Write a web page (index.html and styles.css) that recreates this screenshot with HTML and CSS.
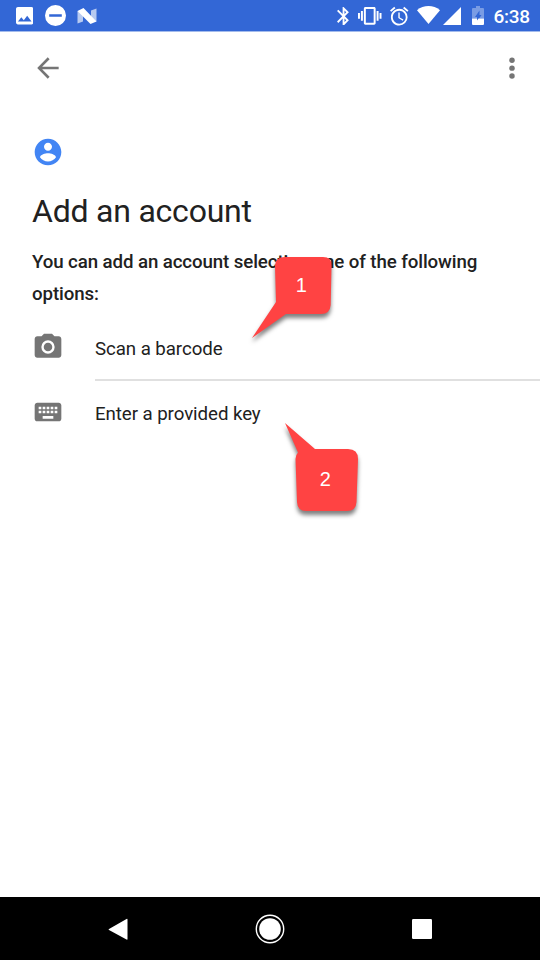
FILE: index.html
```html
<!DOCTYPE html>
<html lang="en">
<head>
<meta charset="utf-8">
<title>Add an account</title>
<link rel="stylesheet" href="styles.css">
</head>
<body>
<div class="screen">
  <header class="status">
    <svg class="s-image" viewBox="3 3 18 18"><path d="M21 19V5c0-1.100-.9-2-2-2H5c-1.100 0-2 .9-2 2v14c0 1.100.9 2 2 2h14c1.100 0 2-.9 2-2zM8.500 13.500l2.500 3.010L14.500 12l4.500 6H5l3.500-4.500z"/></svg>
    <svg class="s-dnd" viewBox="2 2 20 20"><path d="M12 2a10 10 0 1 0 0 20 10 10 0 0 0 0-20zm6 11.200H6v-2.400h12z"/></svg>
    <svg class="s-n" viewBox="0 0 20 16"><path opacity=".65" d="M.5 3 6 4V13.500L.5 15.500zM14 2.500 19.500.5V13.500L14 12z"/><path d="M.5 3 6.500 0 19.500 13.500 13.500 16z"/></svg>
    <span class="spacer"></span>
    <svg class="s-bt" viewBox="5 2 13 20"><path d="M17.710 7.710L12 2h-1v7.590L6.410 5 5 6.410 10.590 12 5 17.590 6.410 19 11 14.410V22h1l5.710-5.710-4.300-4.290 4.300-4.290zM13 5.830l1.880 1.880L13 9.590V5.830zm1.880 10.460L13 18.170v-3.760l1.880 1.880z"/></svg>
    <svg class="s-vib" viewBox="0 3 24 18"><path d="M0 15h2V9H0v6zm3 2h2V7H3v10zm19-8v6h2V9h-2zm-3 8h2V7h-2v10zM16.500 3h-9C6.670 3 6 3.670 6 4.500v15c0 .83.67 1.500 1.500 1.500h9c.83 0 1.500-.67 1.500-1.500v-15c0-.83-.67-1.500-1.500-1.500zM16 19H8V5h8v14z"/></svg>
    <svg class="s-alarm" viewBox="2 2 20 20"><path d="M22 5.720l-4.600-3.860-1.290 1.530 4.600 3.860L22 5.720zM7.880 3.390L6.600 1.860 2 5.710l1.290 1.530 4.590-3.850zM12.500 8H11v6l4.750 2.850.75-1.230-4-2.370V8zM12 4c-4.970 0-9 4.030-9 9s4.020 9 9 9a9 9 0 0 0 0-18zm0 16c-3.870 0-7-3.130-7-7s3.130-7 7-7 7 3.130 7 7-3.130 7-7 7z"/></svg>
    <svg class="s-wifi" viewBox="0 0 23 18"><path d="M0 4.200C6.500-1.400 16.500-1.400 23 4.200L11.500 18z"/></svg>
    <svg class="s-cell" viewBox="0 0 18 18"><path d="M0 18 18 0V18z"/></svg>
    <svg class="s-batt" viewBox="0 0 12 19"><path opacity=".35" d="M4 0H8V2H11Q12 2 12 3V12.500H0V3Q0 2 1 2H4z"/><path d="M7.500 4.500V9H9.500L5 15.500V11H3z" fill="#3367d6"/><path d="M0 12.500H5V14.500L6.500 12.500H12V18Q12 19 11 19H1Q0 19 0 18z"/></svg>
    <span class="clock">6:38</span>
  </header>
  <nav class="appbar">
    <svg class="icon" viewBox="0 0 24 24"><path d="M20 11H7.600l5.600-5.600L11.800 4 3.900 12l7.900 8 1.400-1.400L7.600 13H20z"/></svg>
    <svg class="icon" viewBox="0 0 24 24"><circle cx="12" cy="6.200" r="2.050"/><circle cx="12" cy="12.100" r="2.050"/><circle cx="12" cy="18" r="2.050"/></svg>
  </nav>
  <main>
    <svg class="icon account" viewBox="0 0 24 24"><path d="M12 2C6.480 2 2 6.480 2 12s4.480 10 10 10 10-4.480 10-10S17.520 2 12 2zm0 3c1.660 0 3 1.340 3 3s-1.340 3-3 3-3-1.340-3-3 1.340-3 3-3zm0 14.200c-2.500 0-4.710-1.280-6-3.220.03-1.990 4-3.080 6-3.080 1.990 0 5.970 1.090 6 3.080-1.290 1.940-3.500 3.220-6 3.220z"/></svg>
    <h1>Add an account</h1>
    <p>You can add an account selecting one of the following options:</p>
    <div class="options">
      <div class="option">
        <svg class="icon" viewBox="0 0 24 24"><path fill-rule="evenodd" d="M9 2 7.170 4H4C2.900 4 2 4.900 2 6v12c0 1.100.9 2 2 2h16c1.100 0 2-.9 2-2V6c0-1.100-.9-2-2-2h-3.170L15 2H9zm3 5a5 5 0 1 1 0 10 5 5 0 0 1 0-10zm0 1.800a3.200 3.200 0 1 0 0 6.400 3.200 3.200 0 0 0 0-6.400z"/></svg>
        <span class="label first">Scan a barcode</span>
      </div>
      <div class="option">
        <svg class="icon" viewBox="0 0 24 24"><path d="M20 5H4c-1.100 0-1.990.9-1.990 2L2 17c0 1.100.9 2 2 2h16c1.100 0 2-.9 2-2V7c0-1.100-.9-2-2-2zm-9 3h2v2h-2V8zm0 3h2v2h-2v-2zM8 8h2v2H8V8zm0 3h2v2H8v-2zm-1 2H5v-2h2v2zm0-3H5V8h2v2zm9 7H8v-2h8v2zm0-4h-2v-2h2v2zm0-3h-2V8h2v2zm3 3h-2v-2h2v2zm0-3h-2V8h2v2z"/></svg>
        <span class="label">Enter a provided key</span>
      </div>
    </div>
  </main>
  <footer class="navbar">
    <svg viewBox="0 0 32 32"><path d="M7 16 24.500 6Q25.500 5.500 25.500 6.500V26Q25.500 27 24.500 26.500L7 17Q6 16.500 7 16z"/></svg>
    <svg viewBox="0 0 32 32"><circle cx="16" cy="16" r="10.800"/><circle cx="16" cy="16" r="13.700" fill="none" stroke="#fff" stroke-width="1.400"/></svg>
    <svg viewBox="0 0 32 32"><rect x="6" y="6" width="20" height="20" rx="1.200"/></svg>
  </footer>
  <div class="callout one">
    <svg viewBox="0 0 80 82"><path d="M33 0H71Q80 0 79.500 9L78.700 48Q78 57 69 57H34L0 81 24 45 23 9Q23 0 33 0z"/></svg>
    <span>1</span>
  </div>
  <div class="callout two">
    <svg viewBox="0 0 73 89"><path d="M0 0 30 26H63Q73 26 73 36L71.500 79Q71 88 62 88H21Q12.500 88 12 79L10.500 36Q10.500 32 13 29.500z"/></svg>
    <span>2</span>
  </div>
</div>
</body>
</html>
```
FILE: styles.css
```css
* { box-sizing: border-box; }
body { margin: 0; background: #fff; font-family: Roboto, sans-serif; color: #212121; }
svg { display: block; flex: none; }
.screen { position: relative; width: 540px; height: 960px; display: flex; flex-direction: column; overflow: hidden; }

.status { height: 31px; flex: none; background: #3367d6; box-shadow: 0 1px 0 #a3bbec; display: flex; align-items: flex-start; padding: 0 10px 0 15.5px; fill: #fff; }
.spacer { flex: 1; }
.s-image { width: 17.5px; height: 17.5px; margin-top: 7.2px; }
.s-dnd { width: 21px; height: 21px; margin: 5.3px 0 0 12.3px; }
.s-n { width: 20px; height: 16px; margin: 7.7px 0 0 11.2px; }
.s-bt { width: 12.2px; height: 18.7px; margin: 6.5px 0 0; }
.s-vib { width: 23.5px; height: 17.8px; margin: 7px 0 0 9px; }
.s-alarm { width: 18.5px; height: 18.5px; margin: 6.7px 0 0 8.2px; overflow: visible; }
.s-wifi { width: 23px; height: 18px; margin: 6.3px 0 0 8.7px; }
.s-cell { width: 18px; height: 18px; margin: 6.7px 0 0 3px; }
.s-batt { width: 12px; height: 19px; margin: 6px 0 0 10.7px; }
.clock { width: 36.5px; margin-left: 9.7px; padding-top: 1px; color: #fff; font-size: 19px; line-height: 31px; font-weight: 500; letter-spacing: -.25px; }

.icon { width: 32px; height: 32px; fill: #757575; }
.appbar { height: 74px; flex: none; display: flex; justify-content: space-between; align-items: center; padding: 0 12.5px 0 32px; }
main { flex: 1; padding: 31px 0 0 32px; }
.account { fill: #4285f4; margin-left: -.3px; }
h1 { margin: 23px 0 0; font-size: 32px; line-height: 40px; font-weight: 400; letter-spacing: -.22px; white-space: nowrap; }
p { margin: 15px 0 0; width: 480px; font-size: 18.7px; line-height: 32px; font-weight: 500; letter-spacing: -.1px; }
.options { margin-top: 6px; }
.option { display: flex; align-items: center; height: 65px; }
.option .icon { margin: -3.4px 31.3px 0 -.3px; }
.label { flex: 1; height: 65px; padding-top: 1px; font-size: 18.7px; line-height: 65px; letter-spacing: -.07px; white-space: nowrap; }
.first { border-bottom: 2px solid #e0e0e0; }

.navbar { height: 63px; flex: none; background: #000; display: flex; align-items: center; justify-content: space-between; padding: 0 101.800px 0 102.200px; fill: #fff; }
.navbar svg { width: 32px; height: 32px; }

.callout { position: absolute; }
.callout svg { fill: #ff4343; overflow: visible; filter: drop-shadow(0 4px 2px rgba(0, 0, 0, .5)); }
.callout span { position: absolute; color: #fff; font: 20px/20px "Liberation Sans", sans-serif; }
.one { left: 251.700px; top: 257px; width: 80px; }
.one span { left: 44px; top: 18px; }
.two { left: 284.700px; top: 423px; width: 73px; }
.two span { left: 35px; top: 46px; }
```
